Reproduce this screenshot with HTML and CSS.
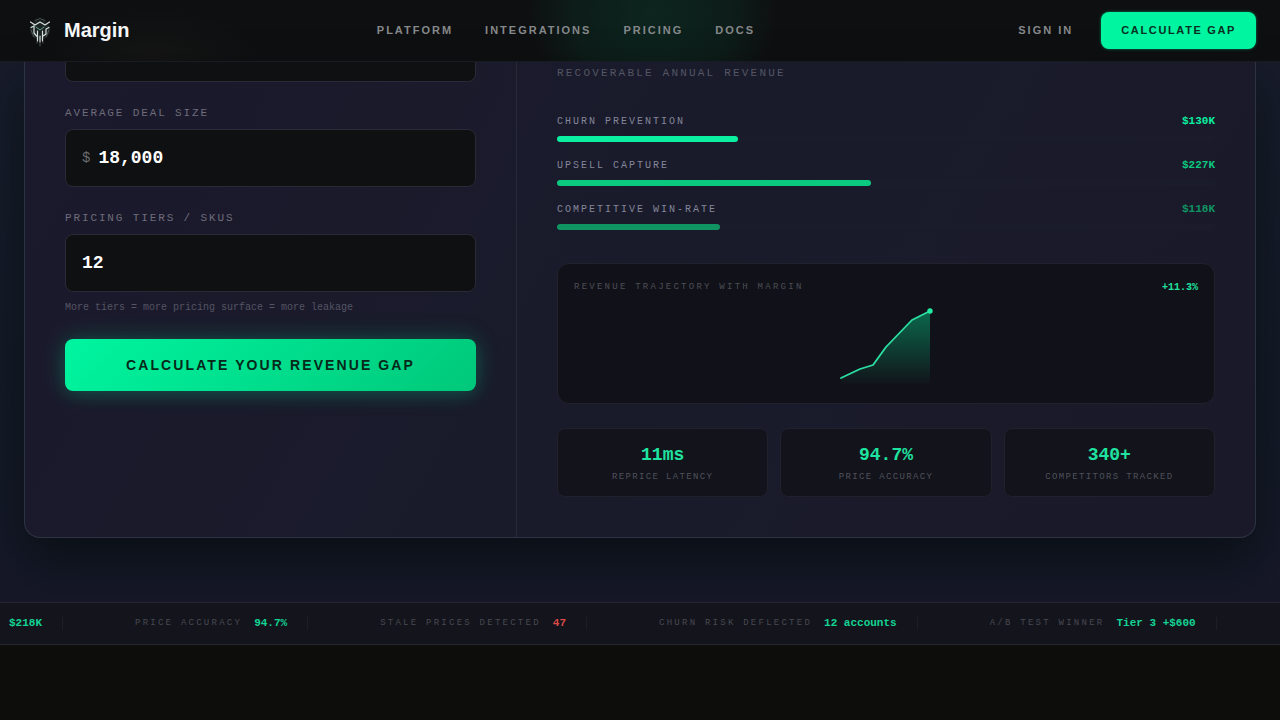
FILE: index.html
```html
<!DOCTYPE html>
<html lang="en">
<head>
<meta charset="utf-8">
<meta name="viewport" content="width=device-width, initial-scale=1">
<title>Margin</title>
<link rel="stylesheet" href="styles.css">
</head>
<body>
<header class="topbar">
  <a class="brand" href="#">
    <svg class="brand-mark" viewBox="0 0 32 32" aria-hidden="true">
      <circle class="mark-halo" cx="16" cy="15" r="10"/>
      <path class="mark-dim" d="M11 5.500 16 3.500 21 5.500M7 15l3 7M25 15l-3 7M13 27v1M19 27v1M16 28v3"/>
      <path class="mark-line" d="M6.500 7 11 10l5-3L21 10l4.500-3M7 12.500l3-1.500v7l2.500 3M25 12.500 22 14v5l-3 2M13.500 16v10M18.500 16v10M16 21v6"/>
      <path class="mark-eye" d="m12 12 4 3 4-3"/>
    </svg>
    <span>Margin</span>
  </a>
  <nav class="menu">
    <a href="#">PLATFORM</a>
    <a href="#">INTEGRATIONS</a>
    <a href="#">PRICING</a>
    <a href="#">DOCS</a>
  </nav>
  <div class="account">
    <a class="sign-in" href="#">SIGN IN</a>
    <button class="cta-small" type="button">CALCULATE GAP</button>
  </div>
</header>

<main class="stage">
  <section class="card">
    <form class="inputs">
      <div class="box box-tail"></div>
      <div class="field">
        <label for="deal">AVERAGE DEAL SIZE</label>
        <div class="box"><span class="prefix">$</span><input id="deal" type="text" value="18,000"></div>
      </div>
      <div class="field">
        <label for="tiers">PRICING TIERS / SKUS</label>
        <div class="box"><input id="tiers" type="text" value="12"></div>
        <p class="hint">More tiers = more pricing surface = more leakage</p>
      </div>
      <button class="cta" type="button">CALCULATE YOUR REVENUE GAP</button>
    </form>

    <div class="results">
      <p class="caption">RECOVERABLE ANNUAL REVENUE</p>
      <div class="bars">
        <div class="bar-row tone-a">
          <div class="bar-head"><span>CHURN PREVENTION</span><b>$130K</b></div>
          <div class="track"><div class="fill" style="width:27.500%"></div></div>
        </div>
        <div class="bar-row tone-b">
          <div class="bar-head"><span>UPSELL CAPTURE</span><b>$227K</b></div>
          <div class="track"><div class="fill" style="width:47.700%"></div></div>
        </div>
        <div class="bar-row tone-c">
          <div class="bar-head"><span>COMPETITIVE WIN-RATE</span><b>$118K</b></div>
          <div class="track"><div class="fill" style="width:24.800%"></div></div>
        </div>
      </div>

      <div class="chart">
        <div class="chart-head"><span>REVENUE TRAJECTORY WITH MARGIN</span><b>+11.3%</b></div>
        <svg class="plot" viewBox="0 0 98 80" role="img" aria-label="Revenue rising">
          <defs>
            <linearGradient id="area" x1="0" y1="0" x2="0" y2="1">
              <stop offset="0" stop-color="#00f5a0" stop-opacity=".38"/>
              <stop offset="1" stop-color="#00f5a0" stop-opacity=".01"/>
            </linearGradient>
          </defs>
          <path d="M4 71 23 62 36 58 49 40 75 13 93 4V77H4Z" fill="url(#area)"/>
          <path class="plot-line" d="M4 71 23 62 36 58 49 40 75 13 93 4"/>
          <circle cx="93" cy="4" r="2.700" fill="#22eba4"/>
        </svg>
      </div>

      <div class="stats">
        <div class="stat"><b>11ms</b><span>REPRICE LATENCY</span></div>
        <div class="stat"><b>94.7%</b><span>PRICE ACCURACY</span></div>
        <div class="stat"><b>340+</b><span>COMPETITORS TRACKED</span></div>
      </div>
    </div>
  </section>
</main>

<div class="ticker">
  <div class="tick"><b>$218K</b></div>
  <div class="tick"><span>PRICE ACCURACY</span><b>94.7%</b></div>
  <div class="tick"><span>STALE PRICES DETECTED</span><b class="alert">47</b></div>
  <div class="tick"><span>CHURN RISK DEFLECTED</span><b>12 accounts</b></div>
  <div class="tick"><span>A/B TEST WINNER</span><b>Tier 3 +$600</b></div>
</div>
</body>
</html>
```
FILE: styles.css
```css
* { box-sizing: border-box; }
:root {
  --mono: "Liberation Mono", monospace;
  --sans: "Liberation Sans", sans-serif;
  --mint: #00f5a0;
}
body {
  margin: 0;
  min-height: 100vh;
  background: #0d0d0c;
  color: #fff;
  font-family: var(--sans);
  overflow: hidden;
}
p { margin: 0; }
a { color: inherit; text-decoration: none; }
button { border: 0; font-family: var(--sans); font-weight: 700; cursor: pointer; }

.topbar {
  display: flex;
  align-items: center;
  justify-content: space-between;
  padding: 12px 24px;
  border-bottom: 1px solid #1b1d24;
  background:
    radial-gradient(ellipse 125px 110px at 51% 20%, rgba(12, 46, 36, .7), rgba(12, 42, 32, .5) 65%, transparent),
    radial-gradient(ellipse 110px 45px at 12% 90%, #141514, transparent),
    #0e0f11;
}
.brand { display: flex; align-items: center; gap: 8px; font-size: 20px; font-weight: 700; color: #f5f6f7; }
.brand-mark { width: 32px; height: 32px; fill: none; stroke-linecap: round; stroke-linejoin: round; }
.mark-halo { fill: #26312f; opacity: .6; }
.mark-dim { stroke: #4c5552; stroke-width: 1; }
.mark-line { stroke: #d5e0dc; stroke-width: 1.2; }
.mark-eye { stroke: #5ba58d; stroke-width: 1; }
.menu { display: flex; gap: 32px; }
.menu, .account { font-size: 11px; font-weight: 700; line-height: 13px; letter-spacing: 2px; color: #85888a; }
.menu a, .sign-in { padding-bottom: 1px; }
.account { display: flex; align-items: center; gap: 12px; }
.sign-in { padding-left: 16px; padding-right: 16px; }
.cta-small {
  padding: 12px 20px;
  border-radius: 8px;
  background: var(--mint);
  box-shadow: 0 0 3px rgba(0, 245, 160, .5);
  color: #07301f;
  font-size: 11px;
  line-height: 13px;
  letter-spacing: .15em;
}

.stage {
  padding: 0 24px 64px;
  background: linear-gradient(180deg, #181c2b, #141b28 50%, #161828);
}
.card {
  display: grid;
  grid-template-columns: 2fr 3fr;
  border: 1px solid #2d3342;
  border-top: 0;
  border-radius: 0 0 16px 16px;
  background: linear-gradient(120deg, #1b192c, #191b2b 50%, #1a192a);
  box-shadow: 0 24px 48px rgba(5, 12, 12, .65);
  font-family: var(--mono);
}
.inputs {
  display: flex;
  flex-direction: column;
  gap: 24px;
  padding: 0 40px 40px;
  border-right: 1px solid #272838;
}
.box {
  display: flex;
  align-items: center;
  gap: 8px;
  height: 58px;
  padding: 0 16px;
  border: 1px solid #292a35;
  border-radius: 8px;
  background: #0f1012;
}
.box-tail { height: 20px; border-top: 0; border-radius: 0 0 8px 8px; }
.field { display: flex; flex-direction: column; }
.field label {
  margin-bottom: 8px;
  font-size: 11px;
  line-height: 15px;
  letter-spacing: .17em;
  color: #6d6c79;
}
.prefix { font-size: 14px; color: #6b6c6f; }
.box input {
  flex: 1;
  min-width: 0;
  padding: 0;
  border: 0;
  outline: 0;
  background: none;
  color: #fff;
  font: 700 18px var(--mono);
}
.hint { margin-top: 8px; font-size: 10px; line-height: 15px; color: #545462; }
.cta {
  padding: 18px 16px;
  border-radius: 8px;
  background: linear-gradient(135deg, var(--mint), #00c87a);
  box-shadow: 0 0 24px rgba(0, 245, 160, .22), 0 4px 16px rgba(0, 245, 160, .1);
  color: #06291a;
  font-size: 14px;
  line-height: 16px;
  letter-spacing: .15em;
}

.results { padding: 4px 40px 40px; }
.caption { font-size: 11px; line-height: 14px; letter-spacing: .2em; color: #545563; }
.bars { display: flex; flex-direction: column; gap: 16px; margin: 34px 0 33px; }
.bar-head {
  display: flex;
  justify-content: space-between;
  margin-bottom: 7px;
  font-size: 10px;
  line-height: 15px;
  letter-spacing: .2em;
  color: #85869a;
}
.bar-head b { font-size: 11px; letter-spacing: 0; color: var(--tone); }
.track { height: 6px; border-radius: 3px; background: #1a1b2b; }
.fill { height: 100%; border-radius: 3px; background: var(--tone); }
.tone-a { --tone: #0af0a0; }
.tone-b { --tone: #0cc980; }
.tone-c { --tone: #109562; }

.chart {
  display: flex;
  flex-direction: column;
  padding: 16px;
  margin-bottom: 24px;
  border: 1px solid #20212c;
  border-radius: 12px;
  background: #111219;
}
.chart-head {
  display: flex;
  justify-content: space-between;
  margin-bottom: 12px;
  font-size: 9px;
  line-height: 15px;
  letter-spacing: .25em;
  color: #4c4d55;
}
.chart-head b { font-size: 10px; letter-spacing: 0; color: #1fe3a0; }
.plot { width: 100%; height: 80px; }
.plot-line { fill: none; stroke: #2be0a2; stroke-width: 1.8; stroke-linejoin: round; stroke-linecap: round; }

.stats { display: grid; grid-template-columns: repeat(3, 1fr); gap: 12px; }
.stat {
  display: flex;
  flex-direction: column;
  gap: 5px;
  padding: 15px 12px 13px;
  border: 1px solid #20212c;
  border-radius: 8px;
  background: #12131b;
  text-align: center;
}
.stat b { font-size: 18px; line-height: 22px; color: #1fe3a0; }
.stat span { font-size: 9px; line-height: 12px; letter-spacing: .15em; color: #50515a; }

.ticker {
  display: flex;
  gap: 72px;
  padding: 14px 9px;
  border: 1px solid #252632;
  border-width: 1px 0;
  background: #13141c;
  font-family: var(--mono);
  white-space: nowrap;
  overflow: hidden;
}
.tick {
  display: flex;
  flex: none;
  gap: 12px;
  padding-right: 20px;
  border-right: 1px solid #1d1e26;
  font-size: 9px;
  line-height: 13px;
  letter-spacing: .25em;
  color: #484951;
}
.tick b { font-size: 11px; letter-spacing: 0; color: #14d494; }
.tick .alert { color: #dc4a48; }
```
